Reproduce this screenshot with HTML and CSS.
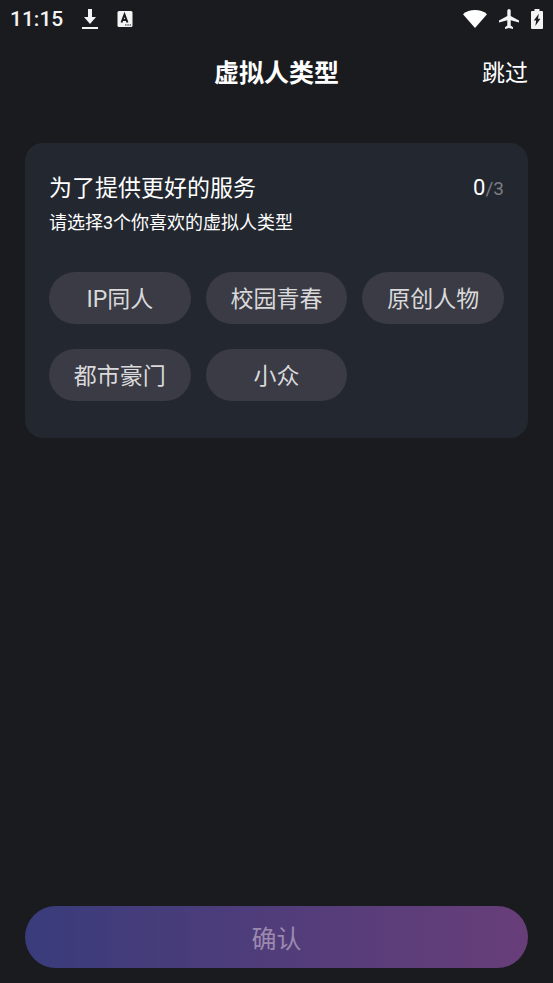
FILE: index.html
```html
<!DOCTYPE html>
<html lang="zh-CN">
<head>
<meta charset="utf-8">
<meta name="viewport" content="width=device-width, initial-scale=1">
<title>虚拟人类型</title>
<link rel="stylesheet" href="styles.css">
</head>
<body>
<div class="status-bar">
  <div class="status-group">
    <span class="clock">11:15</span>
    <svg width="16" height="22" viewBox="0 0 16 22" aria-hidden="true">
      <path fill="#f4f4f4" d="M6 1h4v8h4l-6 7-6-7h4zM0 19h16v2H0z"/>
    </svg>
    <svg width="16" height="18" viewBox="0 0 16 18" aria-hidden="true">
      <rect x="0.5" y="1" width="15" height="16" rx="1.5" fill="#f4f4f4"/>
      <path d="M4.500 12.500 7.500 4.500 10.500 12.500M5.500 10h4" fill="none" stroke="#1a1b1f" stroke-width="2"/>
      <path d="M8 15h1.500m.8 0h1.500m.8 0h1.500" stroke="#1a1b1f" stroke-width="1.200"/>
    </svg>
  </div>
  <div class="status-group status-right">
    <svg width="24" height="20" viewBox="0 0 24 20" aria-hidden="true">
      <path fill="#fff" d="M0 5.200C3.300 2.400 7.400 1 12 1s8.700 1.400 12 4.200L12 19z"/>
    </svg>
    <svg width="20" height="20" viewBox="0 0 20 20" aria-hidden="true">
      <path fill="#f4f4f4" d="M20 13.500v-2L11.700 7V1.700a1.700 1.700 0 0 0-3.400 0V7L0 11.500v2l8.300-2.200V16.500L6 18.300V20l4-1 4 1v-1.700l-2.300-1.800v-5.200z"/>
    </svg>
    <svg width="12" height="20" viewBox="0 0 12 20" aria-hidden="true">
      <path fill="#f4f4f4" d="M3.500 0h5v2H11q1 0 1 1v16q0 1-1 1H1q-1 0-1-1V3q0-1 1-1h2.500z"/>
      <path fill="#1a1b1f" d="M7.800 4.800 2.800 11.500H5.200L4.300 17 9.400 9.700H7z"/>
    </svg>
  </div>
</div>
<header class="top-bar">
  <h1 class="page-title">虚拟人类型</h1>
  <button class="skip" type="button">跳过</button>
</header>
<main class="content">
  <section class="card">
    <div class="card-head">
      <h2 class="card-title">为了提供更好的服务</h2>
      <span class="counter">0<span class="counter-total">/3</span></span>
    </div>
    <p class="card-hint">请选择3个你喜欢的虚拟人类型</p>
    <div class="chips">
      <button class="chip" type="button">IP同人</button>
      <button class="chip" type="button">校园青春</button>
      <button class="chip" type="button">原创人物</button>
      <button class="chip" type="button">都市豪门</button>
      <button class="chip" type="button">小众</button>
    </div>
  </section>
</main>
<footer class="footer">
  <button class="confirm" type="button" disabled>确认</button>
</footer>
</body>
</html>
```
FILE: styles.css
```css
* {
  box-sizing: border-box;
}

body {
  margin: 0;
  min-height: 100vh;
  display: flex;
  flex-direction: column;
  background: #1a1b1f;
  color: #fff;
  font-family: Roboto, "Noto Sans CJK SC", sans-serif;
}

button {
  border: 0;
  padding: 0;
  background: none;
  color: inherit;
  font-family: inherit;
}

h1,
h2,
p {
  margin: 0;
  font-weight: 400;
}

.status-bar {
  display: flex;
  justify-content: space-between;
  align-items: center;
  height: 37px;
  padding: 0 10px;
}

.status-group {
  display: flex;
  align-items: center;
  gap: 19px;
}

.status-right {
  gap: 12px;
}

.clock {
  font-size: 21px;
  font-weight: 500;
  line-height: 24px;
  color: #f4f4f4;
}

.top-bar {
  display: grid;
  grid-template-columns: 1fr auto 1fr;
  align-items: center;
  height: 74px;
  padding: 0 25px;
}

.page-title {
  grid-column: 2;
  font-size: 25px;
  font-weight: 700;
  line-height: 36px;
}

.skip {
  justify-self: end;
  font-size: 23px;
  line-height: 36px;
}

.content {
  flex: 1;
  padding: 32px 25px;
}

.card {
  padding: 28px 24px 37px;
  border-radius: 18px;
  background: #23272f;
}

.card-head {
  display: flex;
  justify-content: space-between;
  align-items: center;
}

.card-title {
  font-size: 23px;
  line-height: 34px;
}

.counter {
  font-size: 22px;
  line-height: 34px;
}

.counter-total {
  font-size: 19px;
  color: #7d7c86;
}

.card-hint {
  font-size: 18px;
  line-height: 34px;
}

.chips {
  display: grid;
  grid-template-columns: repeat(3, 1fr);
  gap: 25px 15px;
  margin-top: 32px;
}

.chip {
  height: 52px;
  padding-bottom: 2px;
  border-radius: 26px;
  background: #3a3b44;
  color: #d9d9db;
  font-size: 23px;
}

.footer {
  padding: 0 25px 15px;
}

.confirm {
  display: block;
  width: 100%;
  height: 62px;
  border-radius: 31px;
  background: linear-gradient(90deg, #393c7b, #683e79);
  color: #9b89ae;
  font-size: 25px;
}
```
